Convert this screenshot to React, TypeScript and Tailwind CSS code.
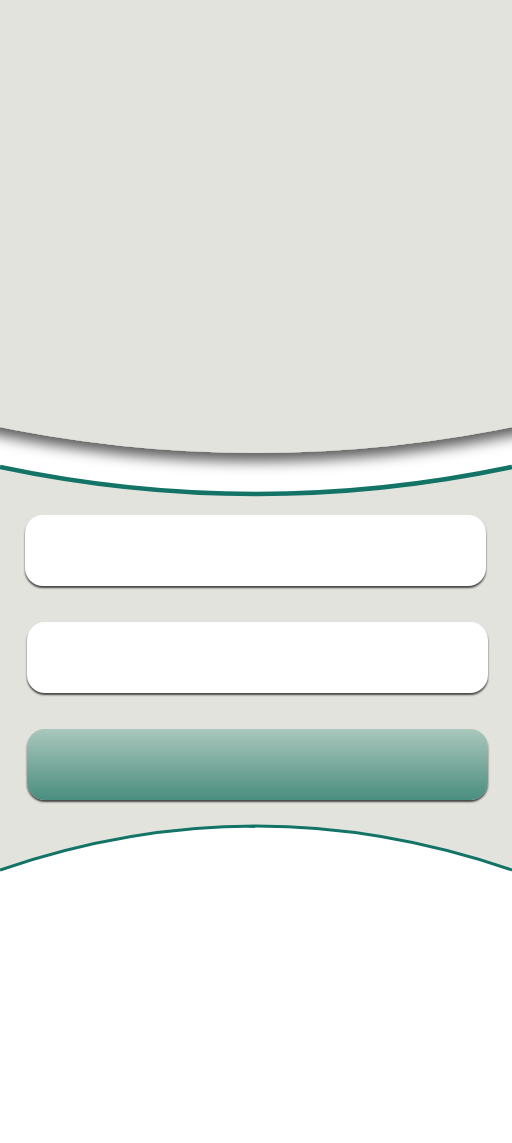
import React from "react";

function Header() {
  return (
    <svg width="512" height="515" viewBox="0 0 512 515" className="block">
      <defs>
        <filter id="hs" x="-10%" y="-10%" width="120%" height="130%">
          <feDropShadow dx="0" dy="8" stdDeviation="7" floodColor="#000" floodOpacity="0.65" />
        </filter>
      </defs>
      <path d="M0 0 H512 V467 Q256 521 0 467 Z" fill="#ffffff" />
      <path d="M0 467 Q256 521 512 467" fill="none" stroke="#137366" strokeWidth="4.5" />
      <path d="M-20 0 H532 V423 Q256 483 -20 423 Z" fill="#e3e3dd" filter="url(#hs)" />
    </svg>
  );
}

function Footer() {
  return (
    <svg width="512" height="343" viewBox="0 0 512 343" className="block">
      <path d="M0 70 Q256 -18 512 70 V343 H0 Z" fill="#ffffff" />
      <path d="M0 70 Q256 -18 512 70" fill="none" stroke="#137366" strokeWidth="3" />
    </svg>
  );
}

export default function App() {
  return (
    <div className="w-[512px] h-[1143px] bg-[#e3e3dd] overflow-hidden flex flex-col" style={{ fontFamily: "Roboto, sans-serif" }}>
      <Header />
      <div className="flex flex-col gap-[36px]">
        <div className="ml-[25px] w-[461px] h-[71px] bg-white rounded-[18px] shadow-[0_2px_2px_rgba(0,0,0,0.7)]" />
        <div className="ml-[27px] w-[461px] h-[71px] bg-white rounded-[18px] shadow-[0_2px_2px_rgba(0,0,0,0.7)]" />
        <div className="ml-[27px] w-[461px] h-[71px] rounded-[18px] bg-gradient-to-b from-[#aac7bd] to-[#488e7f] shadow-[0_2px_2px_rgba(0,0,0,0.7)]" />
      </div>
      <Footer />
    </div>
  );
}
